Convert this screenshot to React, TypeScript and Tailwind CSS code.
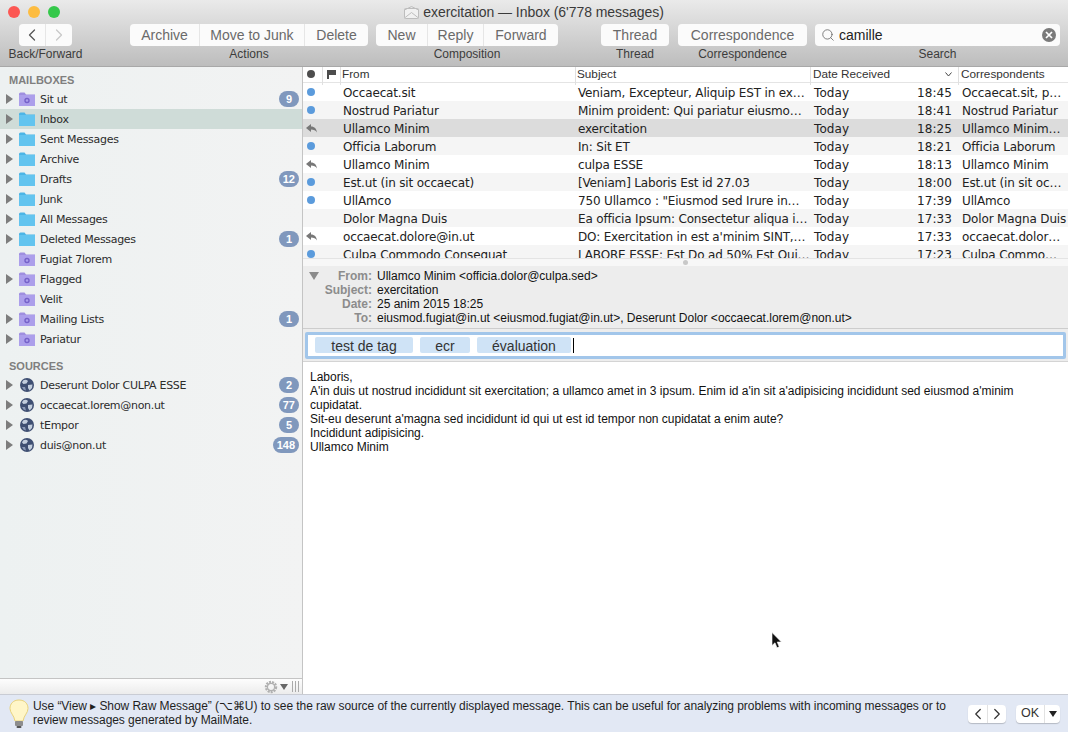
import { ChevronLeft, ChevronRight, Search } from 'lucide-react';

const LIST_FONT = "font-['DejaVu_Sans',sans-serif]";

const mailboxes = [
  { name: 'Sit ut', kind: 'smart', arrow: true, badge: '9' },
  { name: 'Inbox', kind: 'folder', arrow: true, selected: true },
  { name: 'Sent Messages', kind: 'folder', arrow: true },
  { name: 'Archive', kind: 'folder', arrow: true },
  { name: 'Drafts', kind: 'folder', arrow: true, badge: '12' },
  { name: 'Junk', kind: 'folder', arrow: true },
  { name: 'All Messages', kind: 'folder', arrow: true },
  { name: 'Deleted Messages', kind: 'folder', arrow: true, badge: '1' },
  { name: 'Fugiat 7lorem', kind: 'smart' },
  { name: 'Flagged', kind: 'smart', arrow: true },
  { name: 'Velit', kind: 'smart' },
  { name: 'Mailing Lists', kind: 'smart', arrow: true, badge: '1' },
  { name: 'Pariatur', kind: 'smart', arrow: true },
];

const sources = [
  { name: 'Deserunt Dolor CULPA ESSE', badge: '2' },
  { name: 'occaecat.lorem@non.ut', badge: '77' },
  { name: 'tEmpor', badge: '5' },
  { name: 'duis@non.ut', badge: '148' },
];

const messages = [
  { mark: 'dot', from: 'Occaecat.sit', subject: 'Veniam, Excepteur, Aliquip EST in ex…', time: '18:45', who: 'Occaecat.sit, p…' },
  { mark: 'dot', from: 'Nostrud Pariatur', subject: 'Minim proident: Qui pariatur eiusmo…', time: '18:41', who: 'Nostrud Pariatur' },
  { mark: 'reply', from: 'Ullamco Minim', subject: 'exercitation', time: '18:25', who: 'Ullamco Minim…', selected: true },
  { mark: 'dot', from: 'Officia Laborum', subject: 'In: Sit ET', time: '18:21', who: 'Officia Laborum' },
  { mark: 'reply', from: 'Ullamco Minim', subject: 'culpa ESSE', time: '18:13', who: 'Ullamco Minim' },
  { mark: 'dot', from: 'Est.ut (in sit occaecat)', subject: '[Veniam] Laboris Est id 27.03', time: '18:00', who: 'Est.ut (in sit oc…' },
  { mark: 'dot', from: 'UllAmco', subject: '750 Ullamco : "Eiusmod sed Irure in…', time: '17:39', who: 'UllAmco' },
  { mark: '', from: 'Dolor Magna Duis', subject: 'Ea officia Ipsum: Consectetur aliqua i…', time: '17:33', who: 'Dolor Magna Duis' },
  { mark: 'reply', from: 'occaecat.dolore@in.ut', subject: 'DO: Exercitation in est a\'minim SINT,…', time: '17:33', who: 'occaecat.dolor…' },
  { mark: 'dot', from: 'Culpa Commodo Consequat', subject: 'LABORE ESSE: Est Do ad 50% Est Qui…', time: '17:23', who: 'Culpa Commo…' },
];

const headers = [
  ['From:', 'Ullamco Minim <officia.dolor@culpa.sed>'],
  ['Subject:', 'exercitation'],
  ['Date:', '25 anim 2015 18:25'],
  ['To:', 'eiusmod.fugiat@in.ut <eiusmod.fugiat@in.ut>, Deserunt Dolor <occaecat.lorem@non.ut>'],
];

function Arrow({ show }: { show?: boolean }) {
  return (
    <div className="w-[19px] shrink-0 flex justify-center">
      {show && (
        <svg width="7" height="10" viewBox="0 0 7 10">
          <path d="M0 0 L7 5 L0 10 Z" fill="#7d7d7d" />
        </svg>
      )}
    </div>
  );
}

function FolderIcon({ kind }: { kind: string }) {
  const smart = kind === 'smart';
  return (
    <svg width="16" height="14" viewBox="0 0 16 14" className="shrink-0">
      <path d="M0 2 Q0 0.5 1.5 0.5 H5.5 L7 2.5 H16 V14 H0 Z" fill={smart ? '#9f8fe0' : '#4db5e6'} />
      <rect x="0" y="3" width="16" height="11" fill={smart ? '#ac9feb' : '#63c4ef'} />
      {smart && <circle cx="8" cy="8.5" r="2" fill="none" stroke="#7561c9" strokeWidth="1.4" />}
    </svg>
  );
}

function GlobeIcon() {
  return (
    <svg width="14" height="14" viewBox="0 0 14 14" className="shrink-0">
      <circle cx="7" cy="7" r="7" fill="#3f4f72" />
      <path d="M3 2.5 Q6 1 8 3 L6.5 5.5 L3.5 6 L2 4.5 Z M8 7 L12.5 6.5 L12 10 L9.5 12.5 L8 10 Z" fill="#c3cedd" />
      <path d="M2 9 L5 9 L6 12.5 L3.5 11.5 Z" fill="#8b9ab6" />
    </svg>
  );
}

function ReplyMark() {
  return (
    <svg width="11" height="9" viewBox="0 0 11 9">
      <path d="M0 4 L5 0 V2.4 C8.5 2.4 10.5 4.5 11 8.5 C9.5 6.4 8 5.6 5 5.6 V8 Z" fill="#777" />
    </svg>
  );
}

function Badge({ value }: { value?: string }) {
  if (!value) return null;
  return (
    <span className="ml-auto mr-[3px] h-[16px] min-w-[20px] px-[4px] rounded-full bg-[#8098bd] text-white text-[11px] font-bold leading-[16px] text-center tracking-normal font-['Liberation_Sans',sans-serif]">
      {value}
    </span>
  );
}

function Segment({ labels, widths }: { labels: string[]; widths: string[] }) {
  return (
    <div className="flex h-[22px] rounded-[4px] bg-[#fbfbfb] divide-x divide-[#e6e6e6] overflow-hidden">
      {labels.map((label, i) => (
        <div key={label} className={`${widths[i]} flex items-center justify-center pt-[1px] text-[14px] text-[#6a6a6a]`}>
          {label}
        </div>
      ))}
    </div>
  );
}

function Group({ label, className, children }: { label: string; className: string; children: React.ReactNode }) {
  return (
    <div className={`flex flex-col items-center ${className}`}>
      {children}
      <div className="mt-[1px] text-[12px] leading-[14px] text-[#3c3c3c] whitespace-nowrap">{label}</div>
    </div>
  );
}

function Toolbar() {
  return (
    <div className="h-[67px] shrink-0 bg-gradient-to-b from-[#eaeaea] to-[#bdbdbd] border-b border-[#a8a8a8] font-['Liberation_Sans',sans-serif] flex flex-col">
      <div className="h-[24px] shrink-0 relative flex items-center">
        <div className="flex gap-[8px] pl-[8px]">
          <span className="w-[12px] h-[12px] rounded-full bg-[#fc5753]" />
          <span className="w-[12px] h-[12px] rounded-full bg-[#fdbc40]" />
          <span className="w-[12px] h-[12px] rounded-full bg-[#34c84a]" />
        </div>
        <div className="absolute inset-x-0 top-0 h-[24px] flex items-center justify-center gap-[4px] pt-[1px] text-[14px] tracking-[-0.05px] text-[#3a3a3a]">
          <svg width="15" height="13" viewBox="0 0 15 13">
            <rect x="0.5" y="2.5" width="14" height="10" rx="1" fill="#f1f1f1" stroke="#bdbdbd" />
            <path d="M0.5 4 L7.5 0.5 L14.5 4 M0.5 12 L7.5 6.5 L14.5 12" fill="none" stroke="#bdbdbd" />
          </svg>
          <span>exercitation — Inbox (6'778 messages)</span>
        </div>
      </div>
      <div className="flex pl-[9px]">
        <Group label="Back/Forward" className="w-[73px]">
          <div className="flex h-[22px] rounded-[4px] bg-[#fbfbfb] divide-x divide-[#e6e6e6] ml-[-1px]">
            <div className="w-[27px] flex items-center justify-center">
              <ChevronLeft size={20} strokeWidth={1.5} className="text-[#555]" />
            </div>
            <div className="w-[26px] flex items-center justify-center">
              <ChevronRight size={20} strokeWidth={1.5} className="text-[#c8c8c8]" />
            </div>
          </div>
        </Group>
        <Group label="Actions" className="ml-[48px]">
          <Segment labels={['Archive', 'Move to Junk', 'Delete']} widths={['w-[70px]', 'w-[105px]', 'w-[63px]']} />
        </Group>
        <Group label="Composition" className="ml-[8px]">
          <Segment labels={['New', 'Reply', 'Forward']} widths={['w-[52px]', 'w-[56px]', 'w-[74px]']} />
        </Group>
        <Group label="Thread" className="ml-[43px]">
          <Segment labels={['Thread']} widths={['w-[68px]']} />
        </Group>
        <Group label="Correspondence" className="ml-[9px]">
          <Segment labels={['Correspondence']} widths={['w-[129px]']} />
        </Group>
        <Group label="Search" className="ml-[8px]">
          <div className="w-[245px] h-[22px] rounded-[4px] bg-[#fbfbfb] flex items-center pl-[6px] pr-[4px]">
            <Search size={14} strokeWidth={1.4} className="text-[#666]" />
            <span className="ml-[4px] pt-[1px] text-[14px] text-[#222]">camille</span>
            <span className="ml-auto w-[14px] h-[14px] rounded-full bg-[#7a7a7a] flex items-center justify-center">
              <svg width="8" height="8" viewBox="0 0 8 8">
                <path d="M1 1 L7 7 M7 1 L1 7" stroke="#fff" strokeWidth="1.7" />
              </svg>
            </span>
          </div>
        </Group>
      </div>
    </div>
  );
}

function Sidebar() {
  return (
    <aside className={`w-[303px] shrink-0 flex flex-col border-r border-[#c4c4c4] bg-gradient-to-r from-[#edf1f1] to-[#f2f3f3] ${LIST_FONT}`}>
      <div className="flex-1 min-h-0">
        <div className="h-[22px] pl-[9px] pt-[6px] text-[11px] leading-[14px] font-bold text-[#7f7f7f] font-['Liberation_Sans',sans-serif]">MAILBOXES</div>
        {mailboxes.map((m) => (
          <div key={m.name} className={`h-[20px] flex items-center text-[11px] tracking-[-0.3px] text-[#2c2c2c] ${m.selected ? 'bg-[#cfdcd8]' : ''}`}>
            <Arrow show={m.arrow} />
            <FolderIcon kind={m.kind} />
            <span className="ml-[5px] pt-[2px]">{m.name}</span>
            <Badge value={m.badge} />
          </div>
        ))}
        <div className="h-[26px] pl-[9px] pt-[10px] text-[11px] leading-[14px] font-bold text-[#7f7f7f] font-['Liberation_Sans',sans-serif]">SOURCES</div>
        {sources.map((s) => (
          <div key={s.name} className="h-[20px] flex items-center text-[11px] tracking-[-0.3px] text-[#2c2c2c]">
            <Arrow show />
            <span className="w-[16px] flex justify-center shrink-0"><GlobeIcon /></span>
            <span className="ml-[5px] pt-[2px]">{s.name}</span>
            <Badge value={s.badge} />
          </div>
        ))}
      </div>
      <div className="h-[16px] shrink-0 border-t border-[#c4c4c4] bg-gradient-to-b from-[#fdfdfd] to-[#ececec] flex items-center justify-end pr-[3px] gap-[2px]">
        <svg width="14" height="14" viewBox="0 0 14 14">
          <circle cx="7" cy="7" r="5" fill="none" stroke="#b0b0b0" strokeWidth="2.4" strokeDasharray="2 1" />
          <circle cx="7" cy="7" r="3.6" fill="none" stroke="#b0b0b0" strokeWidth="1.2" />
        </svg>
        <svg width="8" height="6" viewBox="0 0 8 6"><path d="M0 0 H8 L4 6 Z" fill="#666" /></svg>
        <div className="ml-[2px] w-[7px] h-[11px] border-x border-[#aaa] flex justify-center">
          <div className="w-px h-full bg-[#aaa]" />
        </div>
      </div>
    </aside>
  );
}

const LIST_COLS = 'grid grid-cols-[20px_18px_235px_235px_148px_1fr]';

function HeaderCell({ className, children }: { className?: string; children?: React.ReactNode }) {
  return <div className={`flex items-center border-r border-[#e0e0e0] pb-[4px] ${className ?? ''}`}>{children}</div>;
}

function MessageList() {
  return (
    <div className="h-[191px] shrink-0 overflow-hidden bg-white">
      <div className={`${LIST_COLS} h-[16px] text-[11.75px] leading-[14px] text-[#333] border-b border-[#e4e4e4] font-['Liberation_Sans',sans-serif]`}>
        <HeaderCell className="pl-[4px]">
          <span className="w-[8px] h-[8px] rounded-full bg-[#4d4d4d]" />
        </HeaderCell>
        <HeaderCell className="justify-center">
          <svg width="9" height="9" viewBox="0 0 9 9"><path d="M0 0 H9 V5 H2 V9 H0 Z" fill="#4d4d4d" /></svg>
        </HeaderCell>
        <HeaderCell className="pl-[1px]">From</HeaderCell>
        <HeaderCell className="pl-[1px]">Subject</HeaderCell>
        <HeaderCell className="pl-[2px] justify-between pr-[6px]">
          Date Received
          <svg width="7" height="5" viewBox="0 0 7 5"><path d="M0.5 0.5 L3.5 4 L6.5 0.5" fill="none" stroke="#444" /></svg>
        </HeaderCell>
        <HeaderCell className="pl-[2px] border-r-0">Correspondents</HeaderCell>
      </div>
      {messages.map((m, i) => (
        <div
          key={m.from + m.time}
          className={`${LIST_COLS} h-[18px] items-center pt-[1px] text-[12px] text-[#222] whitespace-nowrap ${LIST_FONT} ${m.selected ? 'bg-[#dcdcdc]' : i % 2 ? 'bg-[#f5f5f5]' : 'bg-white'}`}
        >
          <div className="flex justify-center pr-[4px] pb-[2px]">
            {m.mark === 'dot' && <span className="w-[8px] h-[8px] rounded-full bg-[#5b9bdc]" />}
            {m.mark === 'reply' && <ReplyMark />}
          </div>
          <div />
          <div className="pl-[2px] overflow-hidden tracking-[-0.15px]">{m.from}</div>
          <div className="pl-[2px] overflow-hidden tracking-[-0.17px]">{m.subject}</div>
          <div className="pl-[3px] pr-[7px] flex justify-between tracking-[0.1px]">
            <span>Today</span>
            <span>{m.time}</span>
          </div>
          <div className="pl-[3px] overflow-hidden tracking-[-0.15px]">{m.who}</div>
        </div>
      ))}
    </div>
  );
}

function MessageView() {
  return (
    <div className="flex-1 min-h-0 flex flex-col font-['Liberation_Sans',sans-serif]">
      <div className="h-[8px] shrink-0 bg-[#f7f7f7] border-t border-[#e4e4e4] flex items-center justify-center">
        <span className="w-[5px] h-[5px] rounded-full bg-[#c8c8c8]" />
      </div>
      <div className="h-[63px] shrink-0 bg-[#ededed] border-b border-[#cdcdcd] relative pt-[3px] text-[12px] leading-[14px]">
        <svg width="10" height="8" viewBox="0 0 10 8" className="absolute left-[6px] top-[6px]">
          <path d="M0 0 H10 L5 8 Z" fill="#8b8b8b" />
        </svg>
        {headers.map(([k, v]) => (
          <div key={k} className="flex">
            <span className="w-[69px] shrink-0 text-right font-bold text-[#8c8c8c]">{k}</span>
            <span className="ml-[5px] text-[#111]">{v}</span>
          </div>
        ))}
      </div>
      <div className="h-[33px] shrink-0 bg-[#ededed] border-b border-[#d4d4d4] px-[2px] flex items-center">
        <div className="w-full h-[27px] bg-white border-[3px] border-[#a2c6ea] rounded-[2px] flex items-center pl-[7px] gap-[7px] text-[14px] text-[#333]">
          <span className="w-[98px] h-[16px] leading-[18px] bg-[#cfe3f6] text-center rounded-[2px]">test de tag</span>
          <span className="w-[50px] h-[16px] leading-[18px] bg-[#cfe3f6] text-center rounded-[2px]">ecr</span>
          <span className="w-[94px] h-[16px] leading-[18px] bg-[#cfe3f6] text-center rounded-[2px]">évaluation</span>
          <span className="w-px h-[15px] bg-black ml-[-5px]" />
        </div>
      </div>
      <div className="flex-1 bg-white pl-[7px] pr-[40px] pt-[8px] text-[12px] leading-[14px] text-[#111]">
        <p>Laboris,</p>
        <p>A'in duis ut nostrud incididunt sit exercitation; a ullamco amet in 3 ipsum. Enim id a'in sit a'adipisicing incididunt sed eiusmod a'minim cupidatat.</p>
        <p>Sit-eu deserunt a'magna sed incididunt id qui ut est id tempor non cupidatat a enim aute?</p>
        <p>Incididunt adipisicing.</p>
        <p>Ullamco Minim</p>
      </div>
    </div>
  );
}

function TipBar() {
  return (
    <div className="h-[38px] shrink-0 bg-[#e2e8f4] border-t border-[#c9ccd4] flex items-center font-['Liberation_Sans',sans-serif]">
      <svg width="20" height="30" viewBox="0 0 20 30" className="ml-[9px] shrink-0">
        <path d="M10 1 C4 1 1 5 1 9.5 C1 14 5 16 6 22 H14 C15 16 19 14 19 9.5 C19 5 16 1 10 1 Z" fill="#fff6c8" stroke="#e8d27a" />
        <rect x="6" y="22" width="8" height="5" rx="1" fill="#8d8d8d" />
        <rect x="7.5" y="27" width="5" height="2" rx="1" fill="#555" />
      </svg>
      <p className="ml-[4px] mb-[2px] w-[925px] text-[12px] leading-[14px] tracking-[-0.06px] text-[#1f1f1f]">
        Use “View ▸ Show Raw Message” (⌥⌘U) to see the raw source of the currently displayed message. This can be useful for analyzing problems with incoming messages or to review messages generated by MailMate.
      </p>
      <div className="ml-auto flex h-[18px] rounded-[4px] bg-white divide-x divide-[#e2e2e2] shadow-[0_1px_1px_rgba(0,0,0,0.2)]">
        <div className="w-[20px] flex items-center justify-center"><ChevronLeft size={18} strokeWidth={1.6} className="text-[#333]" /></div>
        <div className="w-[18px] flex items-center justify-center"><ChevronRight size={18} strokeWidth={1.6} className="text-[#333]" /></div>
      </div>
      <div className="ml-[10px] mr-[8px] flex h-[18px] rounded-[4px] bg-white divide-x divide-[#e2e2e2] shadow-[0_1px_1px_rgba(0,0,0,0.2)]">
        <div className="w-[29px] flex items-center justify-center text-[12.5px] text-[#333]">OK</div>
        <div className="w-[15px] flex items-center justify-center">
          <svg width="8" height="6" viewBox="0 0 8 6"><path d="M0 0 H8 L4 6 Z" fill="#222" /></svg>
        </div>
      </div>
    </div>
  );
}

export default function App() {
  return (
    <div className="w-[1068px] h-[732px] overflow-hidden relative flex flex-col bg-white">
      <Toolbar />
      <div className="flex-1 min-h-0 flex">
        <Sidebar />
        <main className="flex-1 min-w-0 flex flex-col">
          <MessageList />
          <MessageView />
        </main>
      </div>
      <TipBar />
      <svg width="12" height="18" viewBox="0 0 12 18" className="absolute left-[771px] top-[632px]">
        <path d="M1 0.5 V13.5 L4 10.8 L6 15.8 L8.2 14.8 L6.2 10 H10.4 Z" fill="#111" stroke="#fff" strokeWidth="0.6" />
      </svg>
    </div>
  );
}
